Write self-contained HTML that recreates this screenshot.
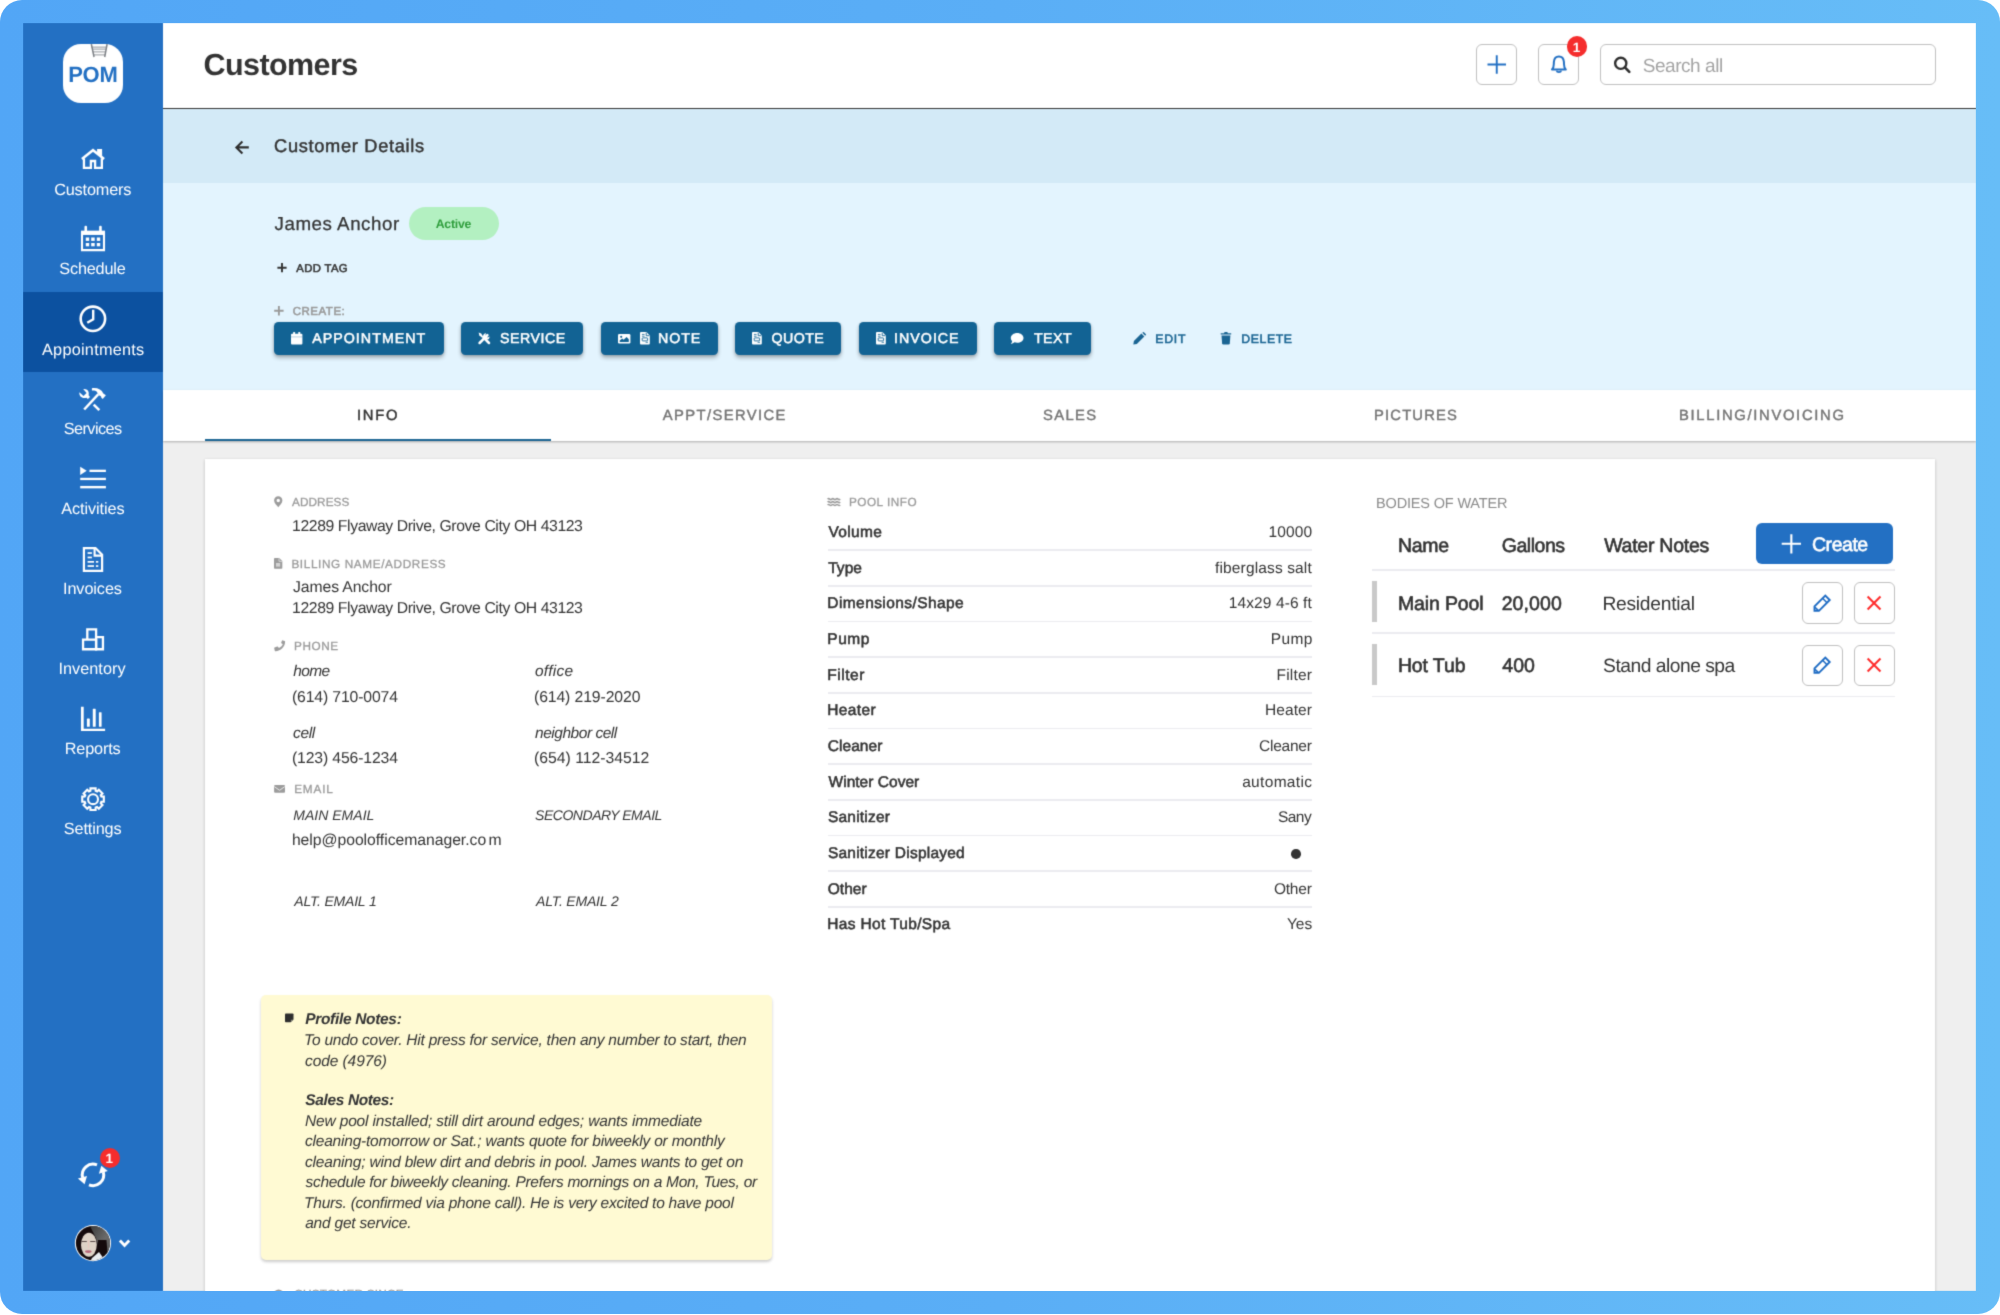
<!DOCTYPE html>
<html lang="en">
<head>
<meta charset="utf-8">
<title>Customers - Customer Details - James Anchor</title>
<style>
*{box-sizing:border-box;margin:0;padding:0}
html,body{width:2000px;height:1315px;overflow:hidden;background:#fff}
body{font-family:"Liberation Sans",Arial,sans-serif;color:#333;position:relative;text-rendering:geometricPrecision}
.frame{position:absolute;left:0;top:0;width:1999.5px;height:1313.5px;border-radius:22px;background:linear-gradient(90deg,#52a6f6 0%,#5aaef6 50%,#67bdf7 100%)}
#app{position:absolute;left:0;top:0;width:2000px;height:1315px;clip-path:inset(23px 24px 24px 23px);filter:url(#soft)}
.g{display:block;position:static;margin:0;padding:0;border:0;width:0;height:0}
.b{position:absolute;display:block}
.t{position:absolute;white-space:nowrap;line-height:1;display:block}
h1,h2,h3{font-weight:400}
svg{position:absolute;display:block;overflow:visible}
.sidebar{left:23px;top:23px;width:140px;height:1268px;background:#2370c3}
.active{left:23px;top:292px;width:140px;height:80px;background:#0c51a0}
.topbar{left:163px;top:23px;width:1813px;height:85.7px;background:#fff;border-bottom:1.7px solid #363636}
.subhead{left:163px;top:108.7px;width:1813px;height:74.3px;background:#d3eaf7}
.hero{left:163px;top:183px;width:1813px;height:207px;background:#e3f4fe}
.page{left:163px;top:390px;width:1813px;height:901px;background:#efefef}
.tabs{left:163px;top:390px;width:1813px;height:51px;background:#fff;box-shadow:0 1px 2px rgba(0,0,0,.28)}
.ind{left:205px;top:438.8px;width:346px;height:2.6px;background:#1b6593}
.card{left:205px;top:459px;width:1730px;height:900px;background:#fff;box-shadow:0 1px 3px rgba(0,0,0,.22)}
.ibtn{background:#fff;border:1.8px solid #c0c0c0;border-radius:6px}
.btn{background:#126394;border-radius:4.5px;box-shadow:0 3px 4px rgba(0,0,0,.24),0 1px 3px rgba(0,0,0,.16);height:33.6px;top:321.5px}
.badge{background:#f52d2d;border-radius:50%;width:21px;height:21px}
.line{height:1.7px;background:#ebebf0}
.notes{left:261px;top:995px;width:511px;height:265px;background:#fffad3;border-radius:5px;box-shadow:0 2px 3px rgba(0,0,0,.2)}
</style>
</head>
<body>
<svg width="0" height="0" style="position:absolute" aria-hidden="true"><filter id="soft" x="0" y="0" width="100%" height="100%" color-interpolation-filters="sRGB"><feConvolveMatrix order="3" kernelMatrix="1 5 1 5 25 5 1 5 1" edgeMode="duplicate"/></filter></svg>
<div class="frame"></div>
<div id="app">
<aside class="g" aria-label="Main navigation">
<div class="b sidebar"></div>
<div class="b active"></div>
<div class="b" style="left:63px;top:43.7px;width:59.8px;height:59.6px;background:#fff;border-radius:18px"></div>
<svg style="left:90px;top:44px" width="19" height="14" viewBox="90 44 19 14"><g fill="none"><path d="M91.5 47.1H107M92.3 49H106.3M92.8 51.85H105.8M93.4 54.75H105.2" stroke="#a9acb0" stroke-width="1.25"/><path d="M91.35 44.2L94.05 57M107.1 44.2L104.7 57" stroke="#7d8186" stroke-width="1.5"/></g></svg>
<span class="t" style="font-size:22px;top:64px;left:68.2px;letter-spacing:-0.28px;font-weight:700;color:#2370c3;">POM</span>
<span class="t" style="font-size:16.25px;top:182px;left:54.2px;letter-spacing:-0.17px;color:#fff;">Customers</span>
<span class="t" style="font-size:16.25px;top:261px;left:59.3px;letter-spacing:-0.19px;color:#fff;">Schedule</span>
<span class="t" style="font-size:16.25px;top:342px;left:42.0px;letter-spacing:0.26px;color:#fff;">Appointments</span>
<span class="t" style="font-size:16.25px;top:421px;left:63.8px;letter-spacing:-0.57px;color:#fff;">Services</span>
<span class="t" style="font-size:16.25px;top:501px;left:61.3px;letter-spacing:-0.09px;color:#fff;">Activities</span>
<span class="t" style="font-size:16.25px;top:581px;left:63.0px;letter-spacing:-0.09px;color:#fff;">Invoices</span>
<span class="t" style="font-size:16.25px;top:661px;left:58.5px;letter-spacing:0.02px;color:#fff;">Inventory</span>
<span class="t" style="font-size:16.25px;top:741px;left:64.7px;letter-spacing:-0.16px;color:#fff;">Reports</span>
<span class="t" style="font-size:16.25px;top:821px;left:63.8px;letter-spacing:-0.13px;color:#fff;">Settings</span>
<svg style="left:78px;top:146px" width="30" height="26" viewBox="78 146 30 26"><g fill="none" stroke="#fff" stroke-width="2.3" stroke-linejoin="miter">
<path d="M83.95 158.2V167.9H90.9V161H95.1V167.9H101.85V158.2"/>
<path d="M81.9 158.9L93 150.15L104.1 158.9" stroke-width="2.5" stroke-linecap="butt"/></g>
<path d="M97.1 149H102.1V156.6L97.1 152.6Z" fill="#fff"/></svg>
<svg style="left:78px;top:224px" width="30" height="30" viewBox="78 224 30 30"><path d="M82 232.7H104V250.15H82Z" fill="none" stroke="#fff" stroke-width="2.1"/>
<rect x="81" y="230.65" width="24" height="4.3" fill="#fff"/>
<rect x="84.45" y="225.8" width="2.6" height="6" rx="1.2" fill="#fff"/><rect x="99.15" y="225.8" width="2.6" height="6" rx="1.2" fill="#fff"/>
<g fill="#fff"><rect x="85.8" y="237.5" width="3.4" height="3.4"/><rect x="91.2" y="237.5" width="3.5" height="3.4"/><rect x="96.8" y="237.5" width="3.4" height="3.4"/>
<rect x="85.8" y="243" width="3.4" height="3.3"/><rect x="91.2" y="243" width="3.5" height="3.3"/><rect x="96.8" y="243" width="3.4" height="3.3"/></g></svg>
<svg style="left:78px;top:304px" width="30" height="30" viewBox="78 304 30 30"><circle cx="92.9" cy="318.8" r="12.2" fill="none" stroke="#fff" stroke-width="2.6"/>
<path d="M93.2 311V319.3L88.3 322.2" fill="none" stroke="#fff" stroke-width="2.4" stroke-linecap="square" stroke-linejoin="miter"/></svg>
<svg style="left:78px;top:386px" width="30" height="28" viewBox="78 386 30 28"><g fill="none" stroke="#fff" stroke-width="2.5">
<path d="M84.2 409.5L98.4 394.2"/>
<path d="M93.7 404.6L99.3 410.2"/>
</g>
<path d="M91.9 388.2C97.5 387.6 101.6 389.4 103.3 393.6L105.9 395.2L102.7 398.9L101.2 397.6C101.4 396.4 100.6 395.4 99.2 395.4L97.2 392.6C97 391 95.6 390.4 91.9 390.4Z" fill="#fff"/>
<path d="M83.2 389.1C87 388.3 89.6 391.4 88.6 395.2L90 397L87.9 399L86.4 397.7C82.5 399.2 78.8 396.4 79.4 392.3L83.5 396L86.6 393.1Z" fill="#fff"/></svg>
<svg style="left:78px;top:464px" width="30" height="28" viewBox="78 464 30 28"><g fill="#fff"><path d="M80.2 466.8L86.7 470.85L80.2 474.9Z"/>
<rect x="89.5" y="469.7" width="16.4" height="2.3"/><rect x="80.2" y="477.8" width="25.7" height="2.3"/><rect x="80.2" y="485.95" width="25.7" height="2.4"/></g></svg>
<svg style="left:78px;top:545px" width="30" height="30" viewBox="78 545 30 30"><path d="M83.9 548.1H95.5L102.1 554.8V570.8H83.9Z" fill="none" stroke="#fff" stroke-width="2.2" stroke-linejoin="miter"/>
<path d="M94.6 548.5V555.6H101.6" fill="none" stroke="#fff" stroke-width="2.1"/>
<g fill="#fff"><rect x="87.6" y="552.2" width="4.3" height="1.7"/><rect x="87.6" y="556.6" width="4.3" height="1.7"/><rect x="87.6" y="561" width="6.4" height="1.7"/><rect x="95.9" y="561" width="2.4" height="1.7"/><rect x="87.6" y="565.2" width="6.4" height="1.7"/><rect x="95.9" y="565.2" width="2.4" height="1.7"/></g></svg>
<svg style="left:78px;top:626px" width="30" height="28" viewBox="78 626 30 28"><g fill="none" stroke="#fff" stroke-width="2.3" stroke-linejoin="miter"><path d="M87.3 639.5V629.3H96.1V637.2"/><path d="M83.05 639.55H96.1V649.25H83.05Z"/><path d="M96.1 637.2H102.95V649.25H96.1Z"/></g></svg>
<svg style="left:78px;top:705px" width="30" height="28" viewBox="78 705 30 28"><g fill="#fff"><path d="M80.95 706.85H83.7V728.75H105.1V731H80.95Z"/>
<rect x="86.9" y="718.6" width="2.9" height="8.2" rx=".6"/><rect x="92.8" y="708.8" width="2.9" height="18" rx=".6"/><rect x="98.9" y="712.2" width="2.7" height="14.6" rx=".6"/></g></svg>
<svg style="left:78px;top:785px" width="30" height="30" viewBox="78 785 30 30"><path d="M90.41 790.90L90.44 788.41L95.62 788.41L95.65 790.90L97.05 791.48L98.83 789.74L102.49 793.40L100.75 795.18L101.33 796.58L103.82 796.61L103.82 801.79L101.33 801.82L100.75 803.22L102.49 805.00L98.83 808.66L97.05 806.92L95.65 807.50L95.62 809.99L90.44 809.99L90.41 807.50L89.01 806.92L87.23 808.66L83.57 805.00L85.31 803.22L84.73 801.82L82.24 801.79L82.24 796.61L84.73 796.58L85.31 795.18L83.57 793.40L87.23 789.74L89.01 791.48Z" fill="none" stroke="#fff" stroke-width="2.1" stroke-linejoin="miter"/>
<circle cx="93.03" cy="799.2" r="4.95" fill="none" stroke="#fff" stroke-width="2.1"/></svg>
<svg style="left:76px;top:1160px" width="34" height="30" viewBox="76 1160 34 30"><g fill="none" stroke="#fff" stroke-width="3">
<path d="M97.01 1164.93A10.7 10.7 0 0 0 82.66 1177.62"/>
<path d="M88.99 1184.77A10.7 10.7 0 0 0 103.34 1172.08"/></g>
<path d="M77.9 1178.4L87 1175.9L84.6 1184.2Z" fill="#fff"/>
<path d="M101.3 1165.8L107.8 1171L98.9 1173.8Z" fill="#fff"/></svg>
<div class="b badge" style="left:99.5px;top:1147.7px;width:20.5px;height:20.5px"></div>
<span class="t" style="font-size:13.5px;top:1152px;left:105.5px;font-weight:700;color:#fff;">1</span>
<svg style="left:74px;top:1224px" width="38" height="38" viewBox="74 1224 38 38" role="img" aria-label="User avatar">
<defs><clipPath id="av"><circle cx="92.95" cy="1243.1" r="17.1"/></clipPath>
<linearGradient id="hair" x1="0" y1="0" x2="1" y2="1"><stop offset="0" stop-color="#3a3a3a"/><stop offset=".55" stop-color="#6b6b6b"/><stop offset="1" stop-color="#4a4a4a"/></linearGradient></defs>
<circle cx="92.95" cy="1243.1" r="18.1" fill="#fff"/>
<g clip-path="url(#av)"><rect x="74" y="1224" width="38" height="38" fill="#140a0c"/>
<path d="M90 1226C101 1224 112 1230 112 1244L109 1257L100 1252L96 1238Z" fill="url(#hair)"/>
<path d="M98 1240L106.5 1240L107.5 1253L102 1257L97 1250Z" fill="#140a0c"/>
<path d="M92 1258L99 1252L106 1262H90Z" fill="#e9eef2"/>
<ellipse cx="88.9" cy="1244.8" rx="7.9" ry="12" fill="#ddd2c6"/>
<path d="M81.5 1241.5H86.8M90.2 1241.5H95.4" stroke="#5a4a48" stroke-width="1.1"/>
<path d="M88.5 1240V1248" stroke="#e8c9c0" stroke-width="1.2"/>
<ellipse cx="88.3" cy="1251.6" rx="3.3" ry="1.3" fill="#b8677a"/></g></svg>
<svg style="left:117px;top:1237px" width="16" height="12" viewBox="117 1237 16 12"><path d="M119.9 1240.6L124.55 1245.4L129.2 1240.6" fill="none" stroke="#fff" stroke-width="2.9"/></svg>
</aside>
<header class="g">
<div class="b topbar"></div>
<h1 class="t" style="font-size:30.5px;top:50px;left:203.5px;letter-spacing:-0.58px;font-weight:700;">Customers</h1>
<div class="b ibtn" style="left:1476.3px;top:44px;width:41px;height:41px"></div>
<div class="b ibtn" style="left:1538.4px;top:44px;width:41px;height:41px"></div>
<div class="b ibtn" style="left:1600.4px;top:44px;width:335.5px;height:41px"></div>
<div class="b badge" style="left:1566.7px;top:36.3px;width:20.4px;height:20.4px"></div>
<span class="t" style="font-size:13.5px;top:41px;left:1572.7px;font-weight:700;color:#fff;">1</span>
<span class="t" style="font-size:19px;top:57px;left:1642.7px;letter-spacing:-0.44px;color:#a3a3a3;">Search all</span>
<svg style="left:1485px;top:53px" width="24" height="24" viewBox="1485 53 24 24"><path d="M1487.5 64.45H1506M1496.75 55.2V73.7" fill="none" stroke="#2370c3" stroke-width="1.9"/></svg>
<svg style="left:1548px;top:53px" width="22" height="24" viewBox="1548 53 22 24"><path d="M1552 69.6C1554.4 67.4 1553.6 65 1553.9 61.8C1554.2 58.6 1556 56.6 1558.9 56.6C1561.8 56.6 1563.6 58.6 1563.9 61.8C1564.2 65 1563.4 67.4 1565.8 69.6Z" fill="none" stroke="#2370c3" stroke-width="2" stroke-linejoin="round"/>
<path d="M1556.6 70.6C1557 72.6 1560.8 72.6 1561.2 70.6" fill="none" stroke="#2370c3" stroke-width="1.8"/></svg>
<svg style="left:1612px;top:55px" width="20" height="20" viewBox="1612 55 20 20"><circle cx="1620.75" cy="63.3" r="5.6" fill="none" stroke="#2e2e2e" stroke-width="2.4"/><path d="M1624.9 67.4L1629.3 71.9" stroke="#2e2e2e" stroke-width="2.6" stroke-linecap="round"/></svg>
</header>
<section class="g" aria-label="Customer Details">
<div class="b subhead"></div>
<h2 class="t" style="font-size:18.25px;top:137px;left:274.1px;letter-spacing:0.67px;-webkit-text-stroke:0.45px #333;">Customer Details</h2>
<svg style="left:233px;top:139px" width="18" height="17" viewBox="233 139 18 17"><path d="M236.3 147.4H248.8M242.4 141.6L236.4 147.4L242.4 153.4" fill="none" stroke="#2e2e2e" stroke-width="2.1" stroke-linejoin="miter"/></svg>
</section>
<section class="g" aria-label="Customer summary and actions">
<div class="b hero"></div>
<h3 class="t" style="font-size:18.75px;top:215px;left:274.6px;letter-spacing:0.52px;-webkit-text-stroke:0.25px #333;">James Anchor</h3>
<div class="b" style="left:408.5px;top:207px;width:90px;height:33px;border-radius:17px;background:#b3f0c1"></div>
<span class="t" style="font-size:12.25px;top:218px;left:435.7px;letter-spacing:-0.21px;font-weight:700;color:#2e9d3b;">Active</span>
<span class="t" style="font-size:11.25px;top:264px;left:296.3px;letter-spacing:0.39px;-webkit-text-stroke:0.55px #333;">ADD TAG</span>
<span class="t" style="font-size:11.5px;top:307px;left:292.7px;letter-spacing:0.52px;-webkit-text-stroke:0.55px #9a9a9a;color:#9a9a9a;">CREATE:</span>
<div class="b btn" style="left:274.2px;width:169.7px"></div>
<div class="b btn" style="left:461.2px;width:122.0px"></div>
<div class="b btn" style="left:600.6px;width:117.4px"></div>
<div class="b btn" style="left:735.3px;width:106.2px"></div>
<div class="b btn" style="left:859.1px;width:117.8px"></div>
<div class="b btn" style="left:994px;width:96.5px"></div>
<span class="t" style="font-size:14.25px;top:332px;left:312.2px;letter-spacing:1.02px;-webkit-text-stroke:0.5px #fff;color:#fff;">APPOINTMENT</span>
<span class="t" style="font-size:14.25px;top:332px;left:500.0px;letter-spacing:0.51px;-webkit-text-stroke:0.5px #fff;color:#fff;">SERVICE</span>
<span class="t" style="font-size:14.25px;top:332px;left:658.1px;letter-spacing:0.9px;-webkit-text-stroke:0.5px #fff;color:#fff;">NOTE</span>
<span class="t" style="font-size:14.25px;top:332px;left:771.5px;letter-spacing:0.4px;-webkit-text-stroke:0.5px #fff;color:#fff;">QUOTE</span>
<span class="t" style="font-size:14.25px;top:332px;left:894.1px;letter-spacing:0.99px;-webkit-text-stroke:0.5px #fff;color:#fff;">INVOICE</span>
<span class="t" style="font-size:14.25px;top:332px;left:1033.9px;letter-spacing:0.44px;-webkit-text-stroke:0.5px #fff;color:#fff;">TEXT</span>
<span class="t" style="font-size:12.25px;top:333px;left:1155.2px;letter-spacing:0.81px;-webkit-text-stroke:0.55px #1b6593;color:#1b6593;">EDIT</span>
<span class="t" style="font-size:12.25px;top:333px;left:1241.3px;letter-spacing:0.59px;-webkit-text-stroke:0.55px #1b6593;color:#1b6593;">DELETE</span>
<svg style="left:276px;top:262px" width="12" height="12" viewBox="276 262 12 12"><path d="M277.4 267.7H286.6M282 263.1V272.3" stroke="#333" stroke-width="1.9" fill="none"/></svg>
<svg style="left:273px;top:305px" width="12" height="12" viewBox="273 305 12 12"><path d="M274.2 310.7H283.6M278.9 306V315.4" stroke="#9a9a9a" stroke-width="1.9" fill="none"/></svg>
<svg style="left:290px;top:331px" width="14" height="15" viewBox="290 331 14 15"><g fill="#fff"><rect x="291" y="333.7" width="11.4" height="10.9" rx="1"/>
<rect x="293.1" y="332" width="2" height="3.2" rx=".6"/><rect x="298.3" y="332" width="2" height="3.2" rx=".6"/></g><path d="M291 336.9H302.4" stroke="#126394" stroke-width=".5" opacity=".6"/></svg>
<svg style="left:477px;top:331px" width="15" height="15" viewBox="477 331 15 15"><g fill="none" stroke="#fff" stroke-width="2.5" stroke-linecap="round"><path d="M479.6 343L487.4 335.2"/><path d="M489 343L483.6 337.6"/></g>
<path d="M486.2 333.2A3.3 3.3 0 1 0 489.6 336.6L487.6 337.4L485.3 335.2Z" fill="#fff"/>
<path d="M478.6 332.4L481.2 333.6L483.4 337L482.2 337.8L479.4 335.4Z" fill="#fff"/></svg>
<svg style="left:616.7px;top:332.5px" width="15" height="12" viewBox="616.7 332.5 15 12"><rect x="617.7" y="333.5" width="12.4" height="9.6" rx="1.3" fill="#fff"/>
<path d="M619.4000000000001 341.4V340.1L621.9000000000001 338.1L623.3000000000001 339.3L626.3000000000001 336.5L628.5 338.7V341.4Z" fill="#126394"/><circle cx="620.9000000000001" cy="336.3" r="1.1" fill="#126394"/></svg>
<svg style="left:638.5px;top:331.1px" width="12" height="15" viewBox="638.5 331.1 12 15"><path d="M640.5 332.1H645.9L649.3 335.5V343.5Q649.3 344.5 648.3 344.5H640.5Q639.5 344.5 639.5 343.5V333.1Q639.5 332.1 640.5 332.1Z" fill="#fff"/>
<path d="M645.6999999999999 332.70000000000005V335.8H648.8" fill="none" stroke="#126394" stroke-width=".9"/>
<path d="M641.4 334.5H644.1M641.4 336.3H644.1M645.1 342.40000000000003H647.5" stroke="#126394" stroke-width=".8" fill="none"/>
<rect x="641.7" y="338.0" width="5.4" height="3" rx=".5" fill="none" stroke="#126394" stroke-width=".9"/></svg>
<svg style="left:751.4px;top:331.2px" width="12" height="15" viewBox="751.4 331.2 12 15"><path d="M753.4 332.2H758.8L762.1999999999999 335.59999999999997V343.59999999999997Q762.1999999999999 344.59999999999997 761.1999999999999 344.59999999999997H753.4Q752.4 344.59999999999997 752.4 343.59999999999997V333.2Q752.4 332.2 753.4 332.2Z" fill="#fff"/>
<path d="M758.5999999999999 332.8V335.9H761.6999999999999" fill="none" stroke="#126394" stroke-width=".9"/>
<path d="M754.3 334.59999999999997H757.0M754.3 336.4H757.0M758.0 342.5H760.4" stroke="#126394" stroke-width=".8" fill="none"/>
<rect x="754.6" y="338.09999999999997" width="5.4" height="3" rx=".5" fill="none" stroke="#126394" stroke-width=".9"/></svg>
<svg style="left:874.7px;top:331.2px" width="12" height="15" viewBox="874.7 331.2 12 15"><path d="M876.7 332.2H882.1L885.5 335.59999999999997V343.59999999999997Q885.5 344.59999999999997 884.5 344.59999999999997H876.7Q875.7 344.59999999999997 875.7 343.59999999999997V333.2Q875.7 332.2 876.7 332.2Z" fill="#fff"/>
<path d="M881.9 332.8V335.9H885.0" fill="none" stroke="#126394" stroke-width=".9"/>
<path d="M877.6 334.59999999999997H880.3000000000001M877.6 336.4H880.3000000000001M881.3000000000001 342.5H883.7" stroke="#126394" stroke-width=".8" fill="none"/>
<rect x="877.9000000000001" y="338.09999999999997" width="5.4" height="3" rx=".5" fill="none" stroke="#126394" stroke-width=".9"/></svg>
<svg style="left:1010px;top:332px" width="15" height="13" viewBox="1010 332 15 13"><path d="M1017.2 333C1020.7 333 1023.5 335.2 1023.5 337.9C1023.5 340.6 1020.7 342.8 1017.2 342.8C1016.2 342.8 1015.3 342.6 1014.5 342.3C1013.6 343.1 1012.3 343.8 1010.8 343.8C1011.6 343 1012.1 342 1012.2 341C1011.3 340.1 1010.8 339.1 1010.8 337.9C1010.8 335.2 1013.7 333 1017.2 333Z" fill="#fff"/></svg>
<svg style="left:1132px;top:331px" width="16" height="15" viewBox="1132 331 16 15"><path d="M1133.3 344.5L1133.9 341.1L1141.4 333.6L1144.3 336.5L1136.8 344L1133.3 344.5Z" fill="#1b6593"/><path d="M1142.3 332.7L1143 332.2Q1143.6 331.8 1144.2 332.4L1145.7 333.9Q1146.3 334.5 1145.8 335.1L1145.2 335.7Z" fill="#1b6593"/></svg>
<svg style="left:1219px;top:331px" width="14" height="15" viewBox="1219 331 14 15"><path d="M1220.7 333.2H1224L1224.6 332.1H1227.3L1227.9 333.2H1231.2V334.6H1220.7Z" fill="#1b6593"/><path d="M1221.5 335.6H1230.4L1229.8 343.3Q1229.7 344.5 1228.5 344.5H1223.4Q1222.2 344.5 1222.1 343.3Z" fill="#1b6593"/></svg>
</section>
<nav class="g" aria-label="Customer tabs">
<div class="b page"></div>
<div class="b tabs"></div>
<div class="b ind"></div>
<span class="t" style="font-size:14.75px;top:409px;left:356.9px;letter-spacing:1.79px;-webkit-text-stroke:0.45px #333;">INFO</span>
<span class="t" style="font-size:14.75px;top:409px;left:662.7px;letter-spacing:1.42px;-webkit-text-stroke:0.45px #757575;color:#757575;">APPT/SERVICE</span>
<span class="t" style="font-size:14.75px;top:409px;left:1043.1px;letter-spacing:1.34px;-webkit-text-stroke:0.45px #757575;color:#757575;">SALES</span>
<span class="t" style="font-size:14.75px;top:409px;left:1374.0px;letter-spacing:1.19px;-webkit-text-stroke:0.45px #757575;color:#757575;">PICTURES</span>
<span class="t" style="font-size:14.75px;top:409px;left:1679.0px;letter-spacing:1.7px;-webkit-text-stroke:0.45px #757575;color:#757575;">BILLING/INVOICING</span>
</nav>
<main class="g">
<div class="b card"></div>
<span class="t" style="font-size:11.75px;top:497px;left:292.0px;letter-spacing:0.09px;-webkit-text-stroke:0.3px #9a9a9a;color:#9a9a9a;">ADDRESS</span>
<span class="t" style="font-size:11.75px;top:559px;left:291.4px;letter-spacing:0.63px;-webkit-text-stroke:0.3px #9a9a9a;color:#9a9a9a;">BILLING NAME/ADDRESS</span>
<span class="t" style="font-size:11.75px;top:641px;left:294.0px;letter-spacing:0.6px;-webkit-text-stroke:0.3px #9a9a9a;color:#9a9a9a;">PHONE</span>
<span class="t" style="font-size:11.75px;top:784px;left:294.2px;letter-spacing:0.85px;-webkit-text-stroke:0.3px #9a9a9a;color:#9a9a9a;">EMAIL</span>
<span class="t" style="font-size:11.75px;top:497px;left:848.9px;letter-spacing:0.52px;-webkit-text-stroke:0.3px #9a9a9a;color:#9a9a9a;">POOL INFO</span>
<span class="t" style="font-size:11.75px;top:1289px;left:294.2px;letter-spacing:0.25px;-webkit-text-stroke:0.3px #9a9a9a;color:#9a9a9a;">CUSTOMER SINCE</span>
<span class="t" style="font-size:15.75px;top:519px;left:292.1px;letter-spacing:-0.4px;">12289 Flyaway Drive, Grove City OH 43123</span>
<span class="t" style="font-size:15.75px;top:580px;left:293.1px;letter-spacing:-0.11px;">James Anchor</span>
<span class="t" style="font-size:15.75px;top:601px;left:292.1px;letter-spacing:-0.4px;">12289 Flyaway Drive, Grove City OH 43123</span>
<span class="t" style="font-size:15.75px;top:690px;left:292.0px;letter-spacing:-0.14px;">(614) 710-0074</span>
<span class="t" style="font-size:15.75px;top:690px;left:534.0px;letter-spacing:-0.1px;">(614) 219-2020</span>
<span class="t" style="font-size:15.75px;top:751px;left:292.0px;letter-spacing:-0.14px;">(123) 456-1234</span>
<span class="t" style="font-size:15.75px;top:751px;left:534.0px;">(654) 112-34512</span>
<span class="t" style="font-size:15.75px;top:833px;left:291.9px;letter-spacing:-0.04px;">help@poolofficemanager.co</span>
<span class="t" style="font-size:15.75px;top:833px;left:488.6px;">m</span>
<span class="t" style="font-size:15.5px;top:664px;left:293.3px;letter-spacing:-0.65px;font-style:italic;">home</span>
<span class="t" style="font-size:15.5px;top:664px;left:534.9px;letter-spacing:0.25px;font-style:italic;">office</span>
<span class="t" style="font-size:15.5px;top:726px;left:293.1px;letter-spacing:-0.4px;font-style:italic;">cell</span>
<span class="t" style="font-size:15.5px;top:726px;left:535.1px;letter-spacing:-0.48px;font-style:italic;">neighbor cell</span>
<span class="t" style="font-size:14px;top:808px;left:293.2px;letter-spacing:0.03px;font-style:italic;">MAIN EMAIL</span>
<span class="t" style="font-size:14px;top:808px;left:535.0px;letter-spacing:-0.46px;font-style:italic;">SECONDARY EMAIL</span>
<span class="t" style="font-size:14px;top:894px;left:294.3px;letter-spacing:-0.2px;font-style:italic;">ALT. EMAIL 1</span>
<span class="t" style="font-size:14px;top:894px;left:536.1px;letter-spacing:-0.18px;font-style:italic;">ALT. EMAIL 2</span>
<section class="b notes"></section>
<span class="t" style="font-size:15.5px;top:1012px;left:305.2px;letter-spacing:-0.32px;font-weight:700;font-style:italic;">Profile Notes:</span>
<span class="t" style="font-size:15.5px;top:1093px;left:305.3px;letter-spacing:-0.37px;font-weight:700;font-style:italic;">Sales Notes:</span>
<span class="t" style="font-size:15.5px;top:1033px;left:304.1px;letter-spacing:-0.23px;font-style:italic;">To undo cover. Hit press for service, then any number to start, then</span>
<span class="t" style="font-size:15.5px;top:1054px;left:305.0px;letter-spacing:-0.08px;font-style:italic;">code (4976)</span>
<span class="t" style="font-size:15.5px;top:1114px;left:305.0px;letter-spacing:-0.16px;font-style:italic;">New pool installed; still dirt around edges; wants immediate</span>
<span class="t" style="font-size:15.5px;top:1134px;left:305.0px;letter-spacing:-0.21px;font-style:italic;">cleaning-tomorrow or Sat.; wants quote for biweekly or monthly</span>
<span class="t" style="font-size:15.5px;top:1155px;left:305.0px;letter-spacing:-0.19px;font-style:italic;">cleaning; wind blew dirt and debris in pool. James wants to get on</span>
<span class="t" style="font-size:15.5px;top:1175px;left:305.5px;letter-spacing:-0.28px;font-style:italic;">schedule for biweekly cleaning. Prefers mornings on a Mon, Tues, or</span>
<span class="t" style="font-size:15.5px;top:1196px;left:304.1px;letter-spacing:-0.24px;font-style:italic;">Thurs. (confirmed via phone call). He is very excited to have pool</span>
<span class="t" style="font-size:15.5px;top:1216px;left:305.2px;letter-spacing:-0.21px;font-style:italic;">and get service.</span>
<span class="t" style="font-size:15.5px;top:525px;left:828.5px;letter-spacing:0.34px;-webkit-text-stroke:0.55px #333;">Volume</span>
<span class="t" style="font-size:15.5px;top:561px;left:828.2px;letter-spacing:0.06px;-webkit-text-stroke:0.55px #333;">Type</span>
<span class="t" style="font-size:15.5px;top:596px;left:827.3px;letter-spacing:0.42px;-webkit-text-stroke:0.55px #333;">Dimensions/Shape</span>
<span class="t" style="font-size:15.5px;top:632px;left:827.3px;letter-spacing:0.53px;-webkit-text-stroke:0.55px #333;">Pump</span>
<span class="t" style="font-size:15.5px;top:668px;left:827.3px;letter-spacing:0.51px;-webkit-text-stroke:0.55px #333;">Filter</span>
<span class="t" style="font-size:15.5px;top:703px;left:827.3px;letter-spacing:0.35px;-webkit-text-stroke:0.55px #333;">Heater</span>
<span class="t" style="font-size:15.5px;top:739px;left:827.8px;letter-spacing:0.04px;-webkit-text-stroke:0.55px #333;">Cleaner</span>
<span class="t" style="font-size:15.5px;top:775px;left:828.5px;letter-spacing:0.03px;-webkit-text-stroke:0.55px #333;">Winter Cover</span>
<span class="t" style="font-size:15.5px;top:810px;left:827.9px;letter-spacing:0.23px;-webkit-text-stroke:0.55px #333;">Sanitizer</span>
<span class="t" style="font-size:15.5px;top:846px;left:827.9px;letter-spacing:0.23px;-webkit-text-stroke:0.55px #333;">Sanitizer Displayed</span>
<span class="t" style="font-size:15.5px;top:882px;left:827.8px;letter-spacing:0.02px;-webkit-text-stroke:0.55px #333;">Other</span>
<span class="t" style="font-size:15.5px;top:917px;left:827.3px;letter-spacing:0.34px;-webkit-text-stroke:0.55px #333;">Has Hot Tub/Spa</span>
<span class="t" style="font-size:15.5px;top:525px;right:687.7px;letter-spacing:0.12px;">10000</span>
<span class="t" style="font-size:15.5px;top:561px;right:688.1px;letter-spacing:0.14px;">fiberglass salt</span>
<span class="t" style="font-size:15.5px;top:596px;right:688.2px;letter-spacing:0.09px;">14x29 4-6 ft</span>
<span class="t" style="font-size:15.5px;top:632px;right:687.4px;letter-spacing:0.34px;">Pump</span>
<span class="t" style="font-size:15.5px;top:668px;right:688.0px;letter-spacing:0.16px;">Filter</span>
<span class="t" style="font-size:15.5px;top:703px;right:688.1px;letter-spacing:0.06px;">Heater</span>
<span class="t" style="font-size:15.5px;top:739px;right:688.4px;letter-spacing:-0.24px;">Cleaner</span>
<span class="t" style="font-size:15.5px;top:775px;right:687.7px;letter-spacing:0.33px;">automatic</span>
<span class="t" style="font-size:15.5px;top:810px;right:688.9px;letter-spacing:-0.57px;">Sany</span>
<span class="t" style="font-size:15.5px;top:882px;right:688.3px;letter-spacing:-0.19px;">Other</span>
<span class="t" style="font-size:15.5px;top:917px;right:687.9px;letter-spacing:-0.04px;">Yes</span>
<div class="b line" style="left:827.5px;width:484px;top:549.4px"></div>
<div class="b line" style="left:827.5px;width:484px;top:585.0px"></div>
<div class="b line" style="left:827.5px;width:484px;top:620.7px"></div>
<div class="b line" style="left:827.5px;width:484px;top:656.4px"></div>
<div class="b line" style="left:827.5px;width:484px;top:692.0px"></div>
<div class="b line" style="left:827.5px;width:484px;top:727.6px"></div>
<div class="b line" style="left:827.5px;width:484px;top:763.3px"></div>
<div class="b line" style="left:827.5px;width:484px;top:798.9px"></div>
<div class="b line" style="left:827.5px;width:484px;top:834.6px"></div>
<div class="b line" style="left:827.5px;width:484px;top:870.2px"></div>
<div class="b line" style="left:827.5px;width:484px;top:905.9px"></div>
<div class="b" style="left:1291.3px;top:849.3px;width:9.6px;height:9.6px;border-radius:50%;background:#333"></div>
<span class="t" style="font-size:14.5px;top:497px;left:1376.0px;letter-spacing:-0.16px;color:#8a8a8a;">BODIES OF WATER</span>
<div class="b" style="left:1756.3px;top:522.7px;width:137px;height:41.4px;border-radius:6px;background:#2370c3"></div>
<span class="t" style="font-size:19.5px;top:537px;left:1397.9px;letter-spacing:-0.28px;-webkit-text-stroke:0.6px #333;">Name</span>
<span class="t" style="font-size:19.5px;top:537px;left:1501.7px;letter-spacing:-0.46px;-webkit-text-stroke:0.6px #333;">Gallons</span>
<span class="t" style="font-size:19.5px;top:537px;left:1604.2px;letter-spacing:-0.26px;-webkit-text-stroke:0.6px #333;">Water Notes</span>
<span class="t" style="font-size:19.5px;top:536px;left:1812.0px;letter-spacing:-0.47px;-webkit-text-stroke:0.6px #fff;color:#fff;">Create</span>
<span class="t" style="font-size:19.5px;top:595px;left:1397.9px;letter-spacing:-0.13px;-webkit-text-stroke:0.6px #333;">Main Pool</span>
<span class="t" style="font-size:19.5px;top:595px;left:1501.7px;letter-spacing:0.08px;-webkit-text-stroke:0.6px #333;">20,000</span>
<span class="t" style="font-size:19.5px;top:657px;left:1397.9px;letter-spacing:-0.11px;-webkit-text-stroke:0.6px #333;">Hot Tub</span>
<span class="t" style="font-size:19.5px;top:657px;left:1502.3px;letter-spacing:0.04px;-webkit-text-stroke:0.6px #333;">400</span>
<span class="t" style="font-size:19.25px;top:595px;left:1602.4px;letter-spacing:-0.27px;">Residential</span>
<span class="t" style="font-size:19.25px;top:657px;left:1603.1px;letter-spacing:-0.5px;">Stand alone spa</span>
<div class="b line" style="left:1371.6px;width:523.3px;top:569px"></div>
<div class="b" style="left:1371.6px;top:581.0px;width:5.4px;height:41.2px;background:#c9c9c9"></div>
<div class="b ibtn" style="left:1802px;top:582.2px;width:41px;height:41.4px"></div>
<div class="b ibtn" style="left:1853.6px;top:582.2px;width:41px;height:41.4px"></div>
<div class="b line" style="left:1371.6px;width:523.3px;top:632.2px"></div>
<div class="b" style="left:1371.6px;top:644.2px;width:5.4px;height:41.2px;background:#c9c9c9"></div>
<div class="b ibtn" style="left:1802px;top:644.5px;width:41px;height:41.4px"></div>
<div class="b ibtn" style="left:1853.6px;top:644.5px;width:41px;height:41.4px"></div>
<div class="b line" style="left:1371.6px;width:523.3px;top:695.5px"></div>
<svg style="left:273px;top:495px" width="11" height="13" viewBox="273 495 11 13"><path fill-rule="evenodd" d="M278.25 496.3C280.6 496.3 282.4 498.1 282.4 500.4C282.4 503 279.6 505.3 278.25 507.2C276.9 505.3 274.1 503 274.1 500.4C274.1 498.1 275.9 496.3 278.25 496.3ZM278.25 498.8A1.7 1.7 0 1 0 278.25 502.2A1.7 1.7 0 1 0 278.25 498.8Z" fill="#9c9c9c"/></svg>
<svg style="left:273.1px;top:557.1px" width="11" height="13" viewBox="273.1 557.1 11 13"><path d="M274.90000000000003 558.1H279.3L282.40000000000003 561.2V568.1Q282.40000000000003 568.9 281.6 568.9H274.90000000000003Q274.1 568.9 274.1 568.1V558.9Q274.1 558.1 274.90000000000003 558.1Z" fill="#9c9c9c"/>
<rect x="276.1" y="563.1" width="4.2" height="3.6" fill="#d4d4d4"/><path d="M279.1 558.5V561.4H282.1" fill="none" stroke="#e4e4e4" stroke-width=".8"/></svg>
<svg style="left:273px;top:639px" width="13" height="13" viewBox="273 639 13 13"><path d="M282.2 640.3L284.6 640.9Q285.1 641 285.1 641.6C285.1 646.9 280.8 651.2 275.5 651.2Q274.9 651.2 274.8 650.7L274.2 648.3Q274.1 647.8 274.6 647.6L277.2 646.5Q277.6 646.3 277.9 646.7L279 648.1C280.7 647.3 282 646 282.8 644.3L281.4 643.2Q281 642.9 281.2 642.5L282.3 639.9Q282.5 640.2 282.2 640.3Z" fill="#9c9c9c"/></svg>
<svg style="left:273px;top:784px" width="13" height="10" viewBox="273 784 13 10"><rect x="274.1" y="784.9" width="10.9" height="7.9" rx="1" fill="#9c9c9c"/><path d="M274.3 786.6L279.55 790.3L284.8 786.6" fill="none" stroke="#f2f2f2" stroke-width=".9"/></svg>
<svg style="left:826px;top:496px" width="16" height="12" viewBox="826 496 16 12"><path d="M827.6 499.2q1.05 -1 2.1 0t2.1 0t2.1 0t2.1 0t2.1 0t2.1 0M827.6 502.1q1.05 -1 2.1 0t2.1 0t2.1 0t2.1 0t2.1 0t2.1 0M827.6 505q1.05 -1 2.1 0t2.1 0t2.1 0t2.1 0t2.1 0t2.1 0" fill="none" stroke="#9c9c9c" stroke-width="1.6"/></svg>
<svg style="left:284px;top:1012px" width="11" height="11" viewBox="284 1012 11 11"><path d="M285.8 1013.5H292.7Q293.5 1013.5 293.5 1014.3V1019.4L290.6 1022.3H285.8Q285 1022.3 285 1021.5V1014.3Q285 1013.5 285.8 1013.5Z" fill="#2e2e2e"/><path d="M290.9 1022V1019.8H293.2Z" fill="#8a8a80"/></svg>
<svg style="left:1780px;top:533px" width="22" height="22" viewBox="1780 533 22 22"><path d="M1781.7 543.8H1801M1791.35 534.2V553.4" stroke="#fff" stroke-width="2.1" fill="none"/></svg>
<svg style="left:1812px;top:593.0px" width="21" height="21" viewBox="1812 593.0 21 21"><g fill="none" stroke="#1f6cc4" stroke-width="1.9" stroke-linejoin="miter"><path d="M1814.5 610.8L1814.5 606.3L1825.3 595.6L1829.7 600.0L1818.9 610.8Z"/><path d="M1822.6 598.3L1827 602.7" stroke-width="1.6"/><path d="M1815 607.2L1818.2 610.4" stroke-width="1.5"/></g></svg>
<svg style="left:1865px;top:594.0px" width="18" height="18" viewBox="1865 594.0 18 18"><path d="M1867.6 596.5L1880.5 609.4M1880.5 596.5L1867.6 609.4" stroke="#ff2d2d" stroke-width="2.1" fill="none"/></svg>
<svg style="left:1812px;top:655.3px" width="21" height="21" viewBox="1812 655.3 21 21"><g fill="none" stroke="#1f6cc4" stroke-width="1.9" stroke-linejoin="miter"><path d="M1814.5 673.0999999999999L1814.5 668.5999999999999L1825.3 657.9L1829.7 662.3L1818.9 673.0999999999999Z"/><path d="M1822.6 660.5999999999999L1827 665.0" stroke-width="1.6"/><path d="M1815 669.5L1818.2 672.6999999999999" stroke-width="1.5"/></g></svg>
<svg style="left:1865px;top:656.3px" width="18" height="18" viewBox="1865 656.3 18 18"><path d="M1867.6 658.8L1880.5 671.6999999999999M1880.5 658.8L1867.6 671.6999999999999" stroke="#ff2d2d" stroke-width="2.1" fill="none"/></svg>
<svg style="left:273px;top:1288px" width="13" height="12" viewBox="273 1288 13 12"><circle cx="278.6" cy="1294.6" r="5.2" fill="#9c9c9c"/></svg>
</main>
</div>
</body>
</html>
